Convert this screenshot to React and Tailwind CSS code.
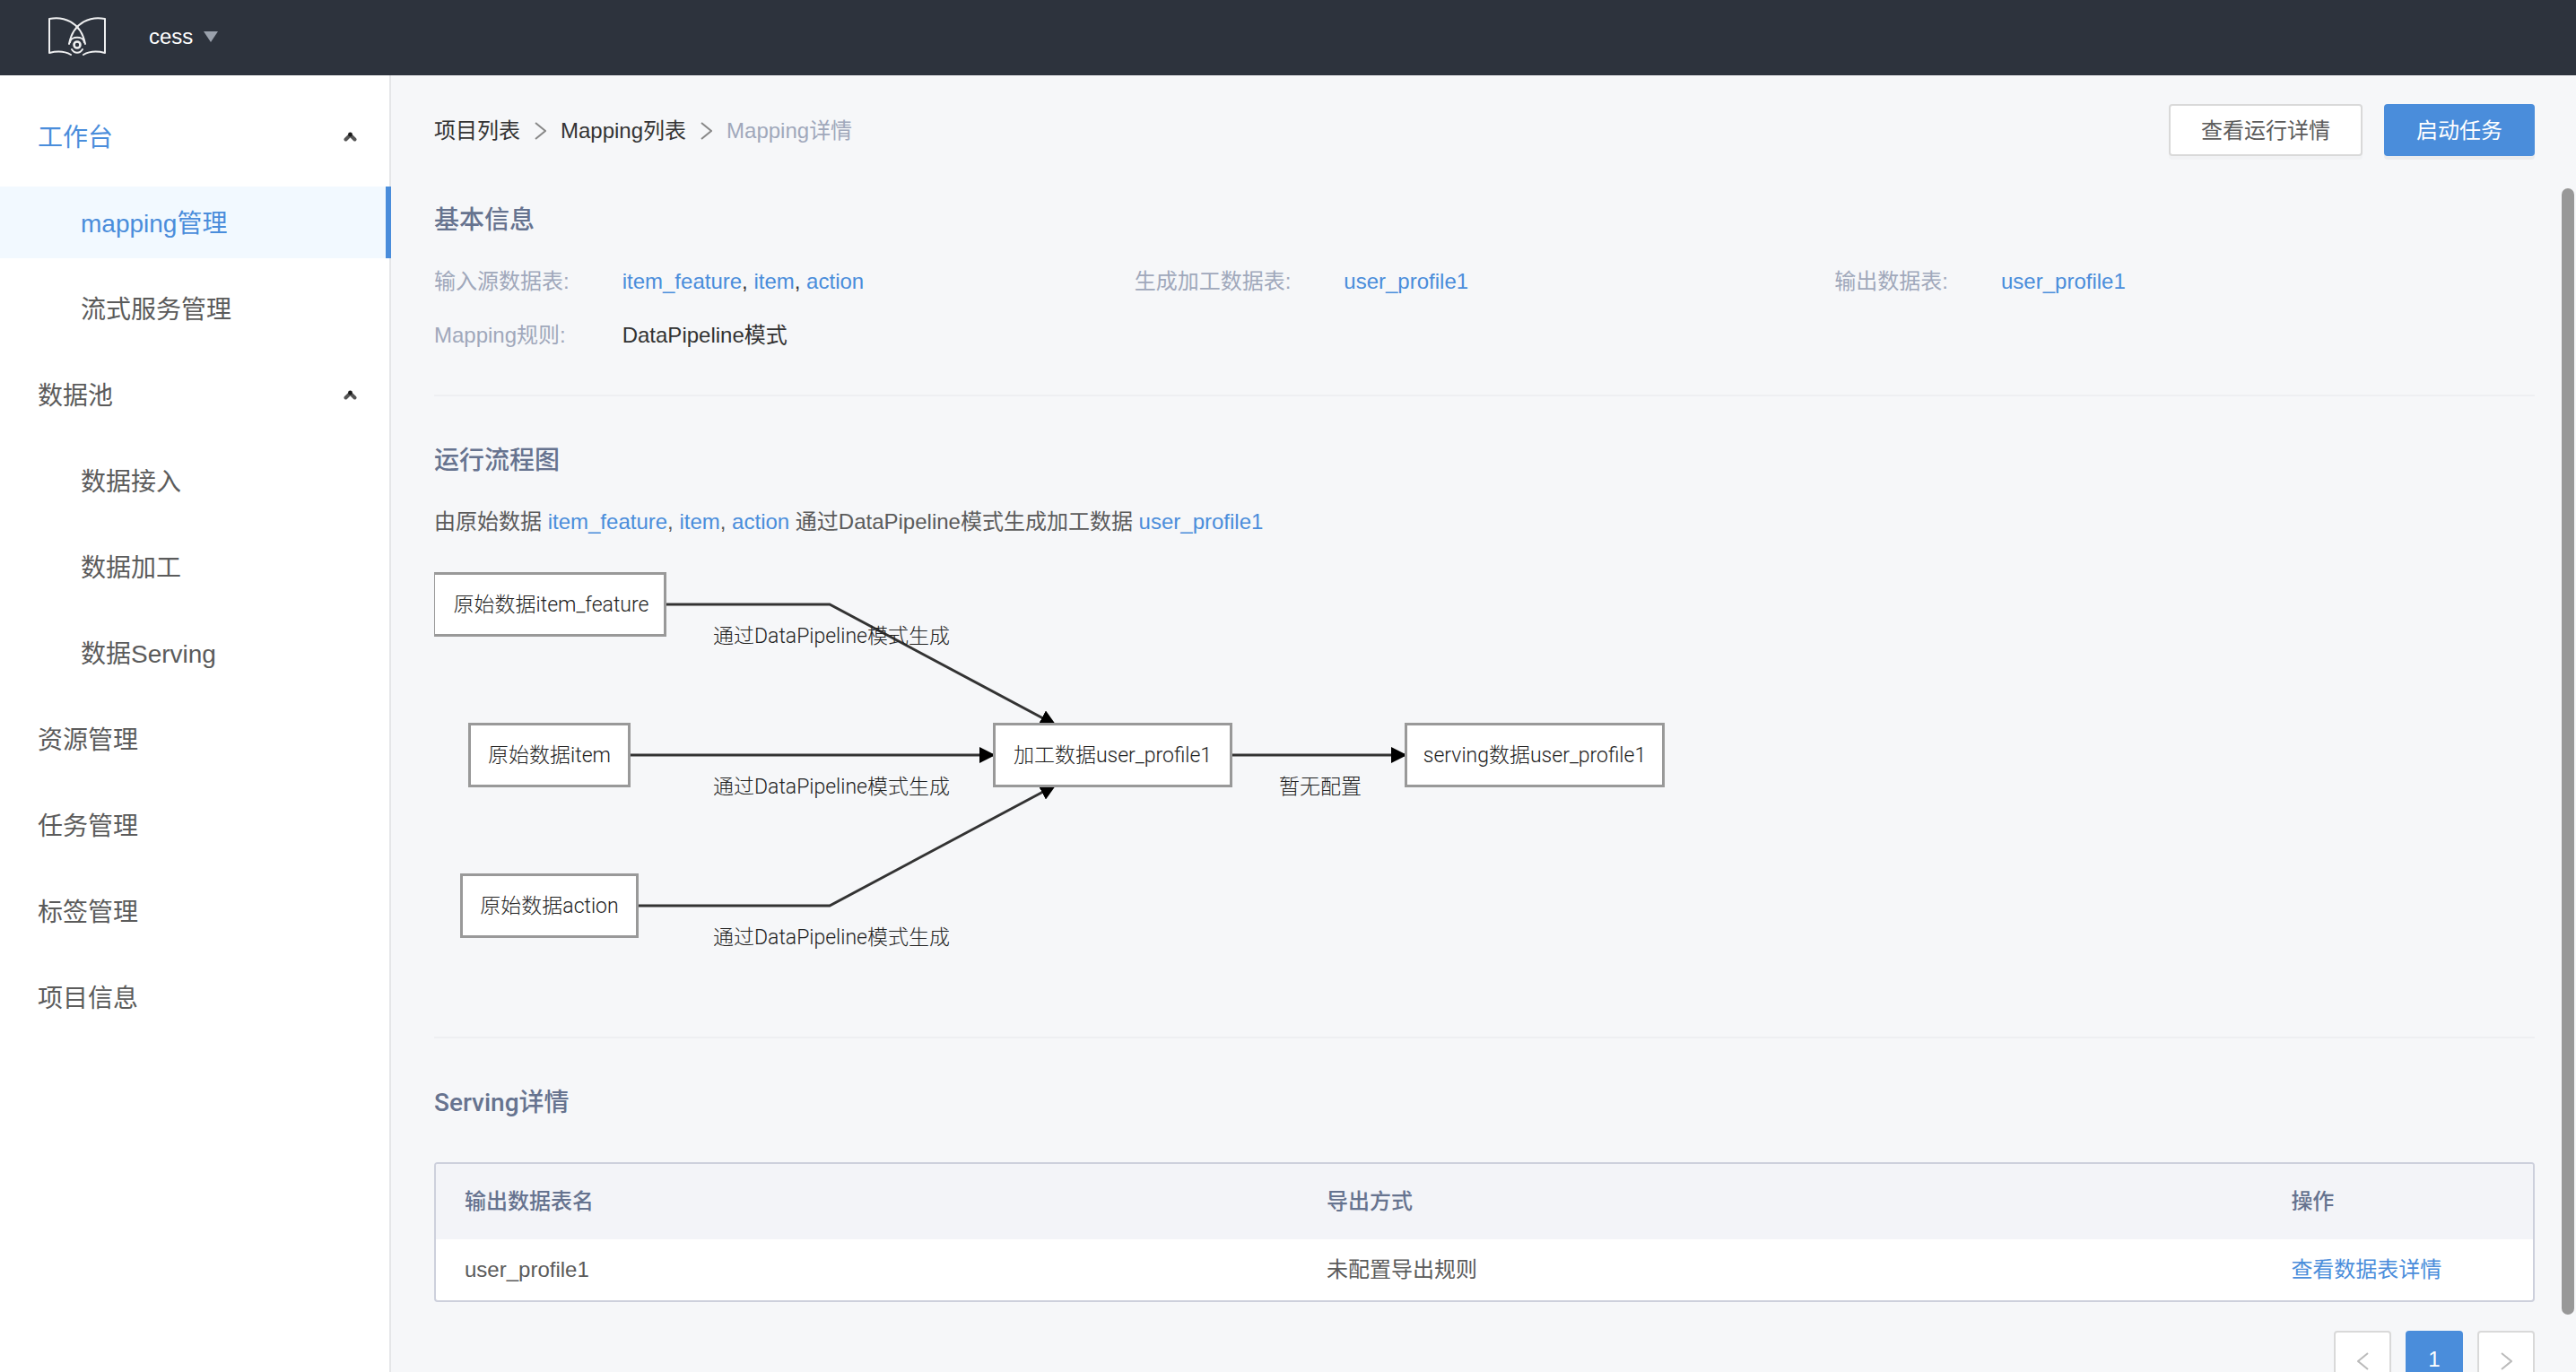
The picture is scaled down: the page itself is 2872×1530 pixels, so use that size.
import React from "react";

const menu = [
  { label: "工作台", open: true, active: true },
  { label: "mapping管理", child: true, current: true },
  { label: "流式服务管理", child: true },
  { label: "数据池", open: true },
  { label: "数据接入", child: true },
  { label: "数据加工", child: true },
  { label: "数据Serving", child: true },
  { label: "资源管理" },
  { label: "任务管理" },
  { label: "标签管理" },
  { label: "项目信息" },
];

const nodes = [
  { label: "原始数据item_feature", place: "left-0 top-0 w-[259px] border-l pl-1" },
  { label: "原始数据item", place: "left-[38px] top-[168px] w-[181px]" },
  { label: "原始数据action", place: "left-[29px] top-[336px] w-[199px]" },
  { label: "加工数据user_profile1", place: "left-[623px] top-[168px] w-[267px]" },
  { label: "serving数据user_profile1", place: "left-[1082px] top-[168px] w-[290px]" },
];

const edgeLabels = [
  { label: "通过DataPipeline模式生成", place: "left-[293px] top-[54px] w-[300px]" },
  { label: "通过DataPipeline模式生成", place: "left-[293px] top-[222px] w-[300px]" },
  { label: "通过DataPipeline模式生成", place: "left-[293px] top-[390px] w-[300px]" },
  { label: "暂无配置", place: "left-[888px] top-[222px] w-[200px]" },
];

const edges = [
  "M259 36 H441 L692 170",
  "M219 204 H624",
  "M228 372 H441 L692 238",
  "M890 204 H1083",
];

function Logo() {
  return (
    <svg width="64" height="44" viewBox="0 0 64 44" fill="none" stroke="#eeeff0" strokeWidth="2" strokeLinecap="round" strokeLinejoin="round" aria-label="logo">
      <path d="M25 42 C18 38 9 38 1 40 V2 C15 -1 36 4 41 30" />
      <path d="M39 42 C46 38 55 38 63 40 V2 C49 -1 28 4 23 30" />
      <path d="M24 28 C25 21 39 21 40 28" />
      <circle cx="32" cy="31" r="3.5" strokeWidth="2.6" />
      <path d="M26 36 C29 41 35 41 38 36" />
    </svg>
  );
}

function Chevron({ className, flip }) {
  return (
    <svg className={className} width="13" height="20" viewBox="0 0 13 20" fill="none" stroke="currentColor" strokeWidth="2" aria-hidden="true">
      <path d={flip ? "M12 1 L1 10 L12 19" : "M1 1 L12 10 L1 19"} />
    </svg>
  );
}

function Sources() {
  return (
    <>
      <a href="#item_feature" className="text-[#4a8ddb]">item_feature</a>, <a href="#item" className="text-[#4a8ddb]">item</a>,{" "}
      <a href="#action" className="text-[#4a8ddb]">action</a>
    </>
  );
}

function Profile() {
  return <a href="#user_profile1" className="text-[#4a8ddb]">user_profile1</a>;
}

function Heading({ children }) {
  return <h2 className="font-['Roboto','Noto_Sans_CJK_SC',sans-serif] text-[28px] leading-10 font-medium text-[#66738f]">{children}</h2>;
}

function Sidebar() {
  return (
    <nav className="w-[436px] shrink-0 border-r-2 border-[#e5e6e8] bg-white pt-7">
      <ul className="flex flex-col gap-4">
        {menu.map((m) => (
          <li key={m.label} className="-mr-0.5">
            <a
              href={"#" + m.label}
              className={
                "flex h-20 items-center justify-between pr-[38px] text-[28px] " +
                (m.child ? "pl-[90px] " : "pl-[42px] ") +
                (m.current ? "border-r-6 border-[#4a8ddb] bg-[#f2f9ff] text-[#4a8ddb]" : m.active ? "text-[#4a8ddb]" : "text-[#5b5b5b]")
              }
            >
              <span className="pt-1">{m.label}</span>
              {m.open && (
                <svg width="15" height="11" viewBox="0 0 15 11" fill="none" stroke="#555" strokeWidth="4" strokeLinecap="round" aria-hidden="true">
                  <path d="M2.5 8.5 L7.5 3.5 L12.5 8.5" />
                  <circle cx="7.5" cy="3" r="2.4" fill="#1a1a1a" stroke="none" />
                </svg>
              )}
            </a>
          </li>
        ))}
      </ul>
    </nav>
  );
}

function Flow() {
  return (
    <div className="relative mt-[38px] h-[518px] overflow-hidden font-['Roboto','Noto_Sans_CJK_SC',sans-serif] text-[23px] font-light text-[#222]">
      <svg className="absolute top-0 left-0" width="1400" height="440" fill="none" stroke="#333" strokeWidth="3">
        <defs>
          <marker id="arrow" viewBox="0 0 10 10" refX="9" refY="5" markerWidth="6" markerHeight="6" orient="auto">
            <path d="M0 0 L10 5 L0 10 Z" fill="#000" stroke="none" />
          </marker>
        </defs>
        {edges.map((d) => (
          <path key={d} d={d} markerEnd="url(#arrow)" />
        ))}
      </svg>
      {nodes.map((n) => (
        <div key={n.label} className={"absolute flex h-[72px] items-center justify-center border-3 border-[#999] bg-white pt-0.5 whitespace-nowrap " + n.place}>
          {n.label}
        </div>
      ))}
      {edgeLabels.map((l) => (
        <div key={l.place} className={"absolute text-center leading-9 whitespace-nowrap " + l.place}>
          {l.label}
        </div>
      ))}
    </div>
  );
}

export default function App() {
  return (
    <div className="flex h-screen flex-col overflow-hidden bg-[#f6f7f9] font-['Liberation_Sans','Noto_Sans_CJK_SC',sans-serif] text-2xl text-[#333]">
      <header className="flex h-[84px] shrink-0 items-center bg-[#2d333d] pb-0.5 pl-[54px]">
        <Logo />
        <button type="button" className="ml-12 flex items-center gap-3 text-white">
          cess
          <svg width="16" height="12" viewBox="0 0 16 12" fill="#9aa1ac" aria-hidden="true">
            <path d="M0 0 H16 L8 12 Z" />
          </svg>
        </button>
      </header>
      <div className="flex min-h-0 flex-1">
        <Sidebar />
        <main className="flex min-w-0 flex-1 flex-col">
          <div className="flex items-center justify-between px-12 pt-8 pr-[46px]">
            <nav className="flex items-center gap-4 pt-0.5">
              <a href="#projects">项目列表</a>
              <Chevron className="text-[#888]" />
              <a href="#mappings">Mapping列表</a>
              <Chevron className="text-[#888]" />
              <span className="text-[#a0a8bb]">Mapping详情</span>
            </nav>
            <div className="flex gap-6">
              <button type="button" className="h-[58px] rounded-sm border-2 border-[#d9d9d9] bg-white px-[34px] pt-0.5 text-[#5b5b5b] shadow-[0_4px_0_rgba(0,0,0,0.02)]">查看运行详情</button>
              <button type="button" className="h-[58px] rounded-sm bg-[#4a8ddb] px-9 pt-0.5 text-white shadow-[0_4px_0_rgba(0,0,0,0.045)]">启动任务</button>
            </div>
          </div>
          <div className="relative min-h-0 flex-1 overflow-hidden pt-[52px] pr-[46px] pl-12">
            <section className="border-b-2 border-[#eeeff2] pb-12">
              <Heading>基本信息</Heading>
              <div className="mt-[30px] grid grid-cols-3 items-start leading-9">
                <dl className="grid grid-cols-[auto_1fr] gap-x-[59px] gap-y-6">
                  <dt className="text-[#a0a8bb]">输入源数据表:</dt>
                  <dd><Sources /></dd>
                  <dt className="text-[#a0a8bb]">Mapping规则:</dt>
                  <dd>DataPipeline模式</dd>
                </dl>
                <dl className="grid grid-cols-[auto_1fr] gap-x-[59px]">
                  <dt className="text-[#a0a8bb]">生成加工数据表:</dt>
                  <dd><Profile /></dd>
                </dl>
                <dl className="grid grid-cols-[auto_1fr] gap-x-[59px]">
                  <dt className="text-[#a0a8bb]">输出数据表:</dt>
                  <dd><Profile /></dd>
                </dl>
              </div>
            </section>
            <section className="border-b-2 border-[#eeeff2] pt-[52px]">
              <Heading>运行流程图</Heading>
              <p className="mt-[30px] leading-9 text-[#5b5b5b]">
                由原始数据 <Sources /> 通过DataPipeline模式生成加工数据 <Profile />
              </p>
              <Flow />
            </section>
            <section className="pt-[52px]">
              <Heading>Serving详情</Heading>
              <div className="mt-[46px] overflow-hidden rounded-sm border-2 border-[#cdd0dc] bg-white">
                <table className="w-full table-fixed text-left">
                  <thead className="bg-[#f3f4f8] text-[#66738f]">
                    <tr className="h-[84px]">
                      <th className="w-[41.1%] px-8 font-medium">输出数据表名</th>
                      <th className="w-[46%] px-8 font-medium">导出方式</th>
                      <th className="px-8 font-medium">操作</th>
                    </tr>
                  </thead>
                  <tbody className="text-[#5b5b5b]">
                    <tr className="h-[68px]">
                      <td className="px-8">user_profile1</td>
                      <td className="px-8">未配置导出规则</td>
                      <td className="px-8 whitespace-nowrap"><a href="#detail" className="text-[#4a8ddb]">查看数据表详情</a></td>
                    </tr>
                  </tbody>
                </table>
              </div>
              <div className="mt-8 flex justify-end gap-4">
                <button type="button" aria-label="上一页" className="flex size-16 items-center justify-center rounded-sm border-2 border-[#d9d9d9] bg-white pt-1 text-[#bbb]">
                  <Chevron flip />
                </button>
                <button type="button" className="size-16 rounded-sm bg-[#4a8ddb] text-white">1</button>
                <button type="button" aria-label="下一页" className="flex size-16 items-center justify-center rounded-sm border-2 border-[#d9d9d9] bg-white pt-1 text-[#bbb]">
                  <Chevron />
                </button>
              </div>
            </section>
            <div className="absolute top-9 right-0.5 bottom-16 w-3.5 rounded-full bg-[#989898]" />
          </div>
        </main>
      </div>
    </div>
  );
}
